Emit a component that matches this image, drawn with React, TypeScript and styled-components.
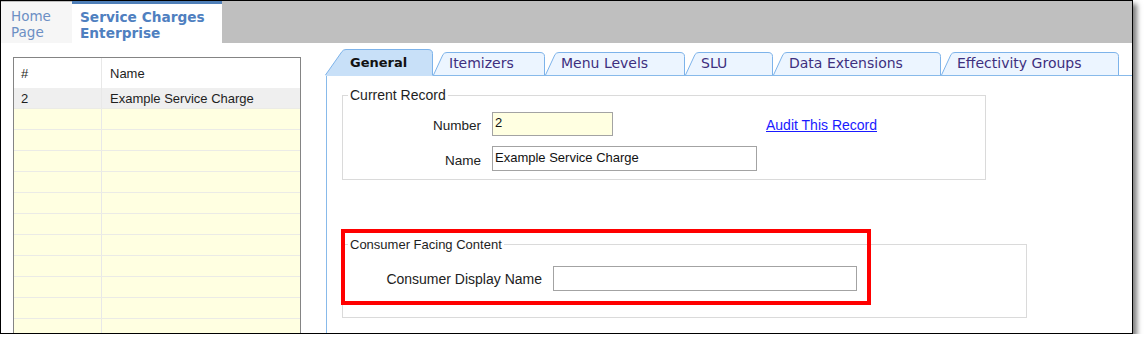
import React from "react";
import styled, { createGlobalStyle } from "styled-components";

const GlobalStyle = createGlobalStyle`
  html, body { margin: 0; padding: 0; background: #ffffff; }
  body { font-family: "Liberation Sans", Arial, sans-serif; }
`;

const Frame = styled.div`
  width: 1133px;
  height: 334px;
  box-sizing: border-box;
  border: 1px solid #000;
  box-shadow: 4px 4px 5px rgba(0, 0, 0, 0.5);
  background: #fff;
  overflow: hidden;
  display: flex;
  flex-direction: column;
`;

const TopBar = styled.div`
  height: 42px;
  flex: none;
  background: #bfbfbf;
  display: flex;
  align-items: stretch;
`;

const PageTab = styled.div<{ $active?: boolean }>`
  box-sizing: border-box;
  margin-top: ${(p) => (p.$active ? "0" : "1px")};
  padding: ${(p) => (p.$active ? "5px 0 0 8px" : "6px 0 0 10px")};
  width: ${(p) => (p.$active ? "150px" : "71px")};
  background: ${(p) => (p.$active ? "#ffffff" : "#f6f6f6")};
  border-top: ${(p) => (p.$active ? "3px solid #4f7fb8" : "none")};
  font-family: "DejaVu Sans", Verdana, sans-serif;
  font-size: ${(p) => (p.$active ? "13.7px" : "13.5px")};
  line-height: 16px;
  font-weight: ${(p) => (p.$active ? 700 : 400)};
  color: ${(p) => (p.$active ? "#4f80c0" : "#6c8fc4")};
  margin-bottom: ${(p) => (p.$active ? "-1px" : "0")};
`;

const Body = styled.div`
  flex: 1;
  display: flex;
  min-height: 0;
  overflow: hidden;
`;

const Grid = styled.div`
  margin: 14px 0 0 12px;
  width: 288px;
  flex: none;
  box-sizing: border-box;
  border: 1px solid #848484;
  border-bottom: none;
  background: #ffffe1;
  font-size: 13px;
  color: #1e1e1e;
`;

const GridRow = styled.div<{ $kind: "head" | "selected" | "empty" }>`
  display: grid;
  grid-template-columns: 88px 1fr;
  height: ${(p) => (p.$kind === "head" ? "30px" : "21px")};
  box-sizing: border-box;
  background: ${(p) =>
    p.$kind === "head" ? "#ffffff" : p.$kind === "selected" ? "#efefef" : "#ffffe1"};
  border-bottom: ${(p) => (p.$kind === "head" ? "none" : "1px solid #ebebe6")};
`;

const Cell = styled.div<{ $first?: boolean }>`
  display: flex;
  align-items: center;
  padding-left: ${(p) => (p.$first ? "7px" : "8px")};
  border-right: ${(p) => (p.$first ? "1px solid #e8e8e8" : "none")};
  white-space: nowrap;
`;

const RightSide = styled.div`
  flex: 1;
  margin: 6px 0 0 24px;
  display: flex;
  flex-direction: column;
  min-width: 0;
`;

const TabStrip = styled.div`
  height: 26px;
  display: flex;
  align-items: flex-end;
  flex: none;
`;

const TabBox = styled.div<{ $w: number; $active?: boolean }>`
  position: relative;
  width: ${(p) => p.$w}px;
  height: ${(p) => (p.$active ? "27px" : "23px")};
  margin-bottom: ${(p) => (p.$active ? "-1px" : "0")};
  z-index: ${(p) => (p.$active ? 2 : 1)};
  flex: none;
  box-sizing: border-box;
  padding-left: ${(p) => (p.$active ? "25px" : "16px")};
  padding-top: ${(p) => (p.$active ? "5px" : "3px")};
  font-family: "DejaVu Sans", Verdana, sans-serif;
  font-size: ${(p) => (p.$active ? "13px" : "14px")};
  line-height: 17px;
  font-weight: ${(p) => (p.$active ? 700 : 400)};
  color: ${(p) => (p.$active ? "#111" : "#3e2f7e")};
  white-space: nowrap;
`;

const TabShape = styled.svg`
  position: absolute;
  left: 0;
  top: 0;
  overflow: visible;
`;

const TabLabel = styled.span`
  position: relative;
`;

const Panel = styled.div`
  flex: 1;
  margin-left: 1px;
  border-left: 1px solid #88baea;
  border-top: 1px solid #88baea;
  padding: 12px 0 0 15px;
  display: flex;
  flex-direction: column;
  font-size: 13px;
  color: #222;
`;

const GroupBox = styled.fieldset<{ $w: number; $pt: number; $pb: number }>`
  width: ${(p) => p.$w}px;
  box-sizing: border-box;
  margin: 0;
  min-width: 0;
  border: 1px solid #dadada;
  padding: ${(p) => `${p.$pt}px 0 ${p.$pb}px 0`};
`;

const Legend = styled.legend<{ $size?: number }>`
  margin-left: 5px;
  padding: 0 2px;
  font-size: ${(p) => p.$size ?? 13}px;
  line-height: 15px;
  color: #1e1e1e;
`;

const FormGrid = styled.div<{ $cols: string }>`
  display: grid;
  grid-template-columns: ${(p) => p.$cols};
  column-gap: 11px;
  row-gap: 10px;
  align-items: center;
`;

const Label = styled.label<{ $shift?: number; $size?: number }>`
  text-align: right;
  padding-top: ${(p) => p.$shift ?? 0}px;
  font-size: ${(p) => p.$size ?? 13.5}px;
  color: #222;
  white-space: nowrap;
`;

const TextBox = styled.input<{ $w: number; $h: number; $yellow?: boolean }>`
  width: ${(p) => p.$w}px;
  height: ${(p) => p.$h}px;
  box-sizing: border-box;
  margin: 0;
  border: 1px solid #a3a3a3;
  background: ${(p) => (p.$yellow ? "#ffffe1" : "#ffffff")};
  padding: 0 2px 3px 2px;
  font-family: "Liberation Sans", Arial, sans-serif;
  font-size: 13px;
  color: #111;
  outline: none;
`;

const AuditLink = styled.a`
  margin-left: -2px;
  padding-top: 2px;
  color: #1a1aff;
  text-decoration: underline;
  font-size: 14px;
  white-space: nowrap;
`;

const Highlight = styled.div`
  position: relative;
  margin-top: 57px;
  width: fit-content;
`;

const RedBox = styled.div`
  position: absolute;
  left: -1px;
  top: -8px;
  width: 530px;
  height: 76px;
  box-sizing: border-box;
  border: 4px solid #ff0000;
  pointer-events: none;
`;

type TabDef = { label: string; w: number; active?: boolean };

const tabs: TabDef[] = [
  { label: "General", w: 108, active: true },
  { label: "Itemizers", w: 112 },
  { label: "Menu Levels", w: 140 },
  { label: "SLU", w: 88 },
  { label: "Data Extensions", w: 168 },
  { label: "Effectivity Groups", w: 178 },
];

function Tab({ label, w, active }: TabDef) {
  const h = active ? 27 : 23;
  const stroke = active
    ? `M0.5,${h - 1} L17,2.5 Q18.3,0.5 21,0.5 L${w - 5},0.5 Q${w - 0.5},0.5 ${w - 0.5},4.5 L${w - 0.5},${h - 1}`
    : `M0.5,${h} L10,2.5 Q11.3,0.5 14,0.5 L${w - 5},0.5 Q${w - 0.5},0.5 ${w - 0.5},4.5 L${w - 0.5},${h}`;
  const fill = `${stroke} L${w - 0.5},${h} L0.5,${h} Z`;
  return (
    <TabBox $w={w} $active={active}>
      <TabShape width={w} height={h}>
        <path d={fill} fill={active ? "#c8e0f8" : "#ecf5ff"} />
        <path d={stroke} fill="none" stroke="#7db3ea" strokeWidth={1} />
      </TabShape>
      <TabLabel>{label}</TabLabel>
    </TabBox>
  );
}

export default function App() {
  const emptyRows = Array.from({ length: 12 }, (_, i) => i);
  return (
    <>
      <GlobalStyle />
      <Frame>
        <TopBar>
          <PageTab>
            Home
            <br />
            Page
          </PageTab>
          <PageTab $active>
            Service Charges
            <br />
            Enterprise
          </PageTab>
        </TopBar>
        <Body>
          <Grid>
            <GridRow $kind="head">
              <Cell $first>#</Cell>
              <Cell>Name</Cell>
            </GridRow>
            <GridRow $kind="selected">
              <Cell $first>2</Cell>
              <Cell>Example Service Charge</Cell>
            </GridRow>
            {emptyRows.map((i) => (
              <GridRow key={i} $kind="empty">
                <Cell $first />
                <Cell />
              </GridRow>
            ))}
          </Grid>
          <RightSide>
            <TabStrip>
              {tabs.map((t) => (
                <Tab key={t.label} {...t} />
              ))}
            </TabStrip>
            <Panel>
              <GroupBox $w={644} $pt={9} $pb={8}>
                <Legend $size={14}>Current Record</Legend>
                <FormGrid $cols="138px 265px auto">
                  <Label $shift={3}>Number</Label>
                  <TextBox $w={121} $h={24} $yellow readOnly value="2" />
                  <AuditLink href="#">Audit This Record</AuditLink>
                  <Label $shift={4}>Name</Label>
                  <TextBox $w={265} $h={25} readOnly value="Example Service Charge" />
                  <span />
                </FormGrid>
              </GroupBox>
              <Highlight>
                <GroupBox $w={685} $pt={14} $pb={26}>
                  <Legend>Consumer Facing Content</Legend>
                  <FormGrid $cols="199px 304px">
                    <Label $size={14}>Consumer Display Name</Label>
                    <TextBox $w={304} $h={25} readOnly value="" />
                  </FormGrid>
                </GroupBox>
                <RedBox />
              </Highlight>
            </Panel>
          </RightSide>
        </Body>
      </Frame>
    </>
  );
}
